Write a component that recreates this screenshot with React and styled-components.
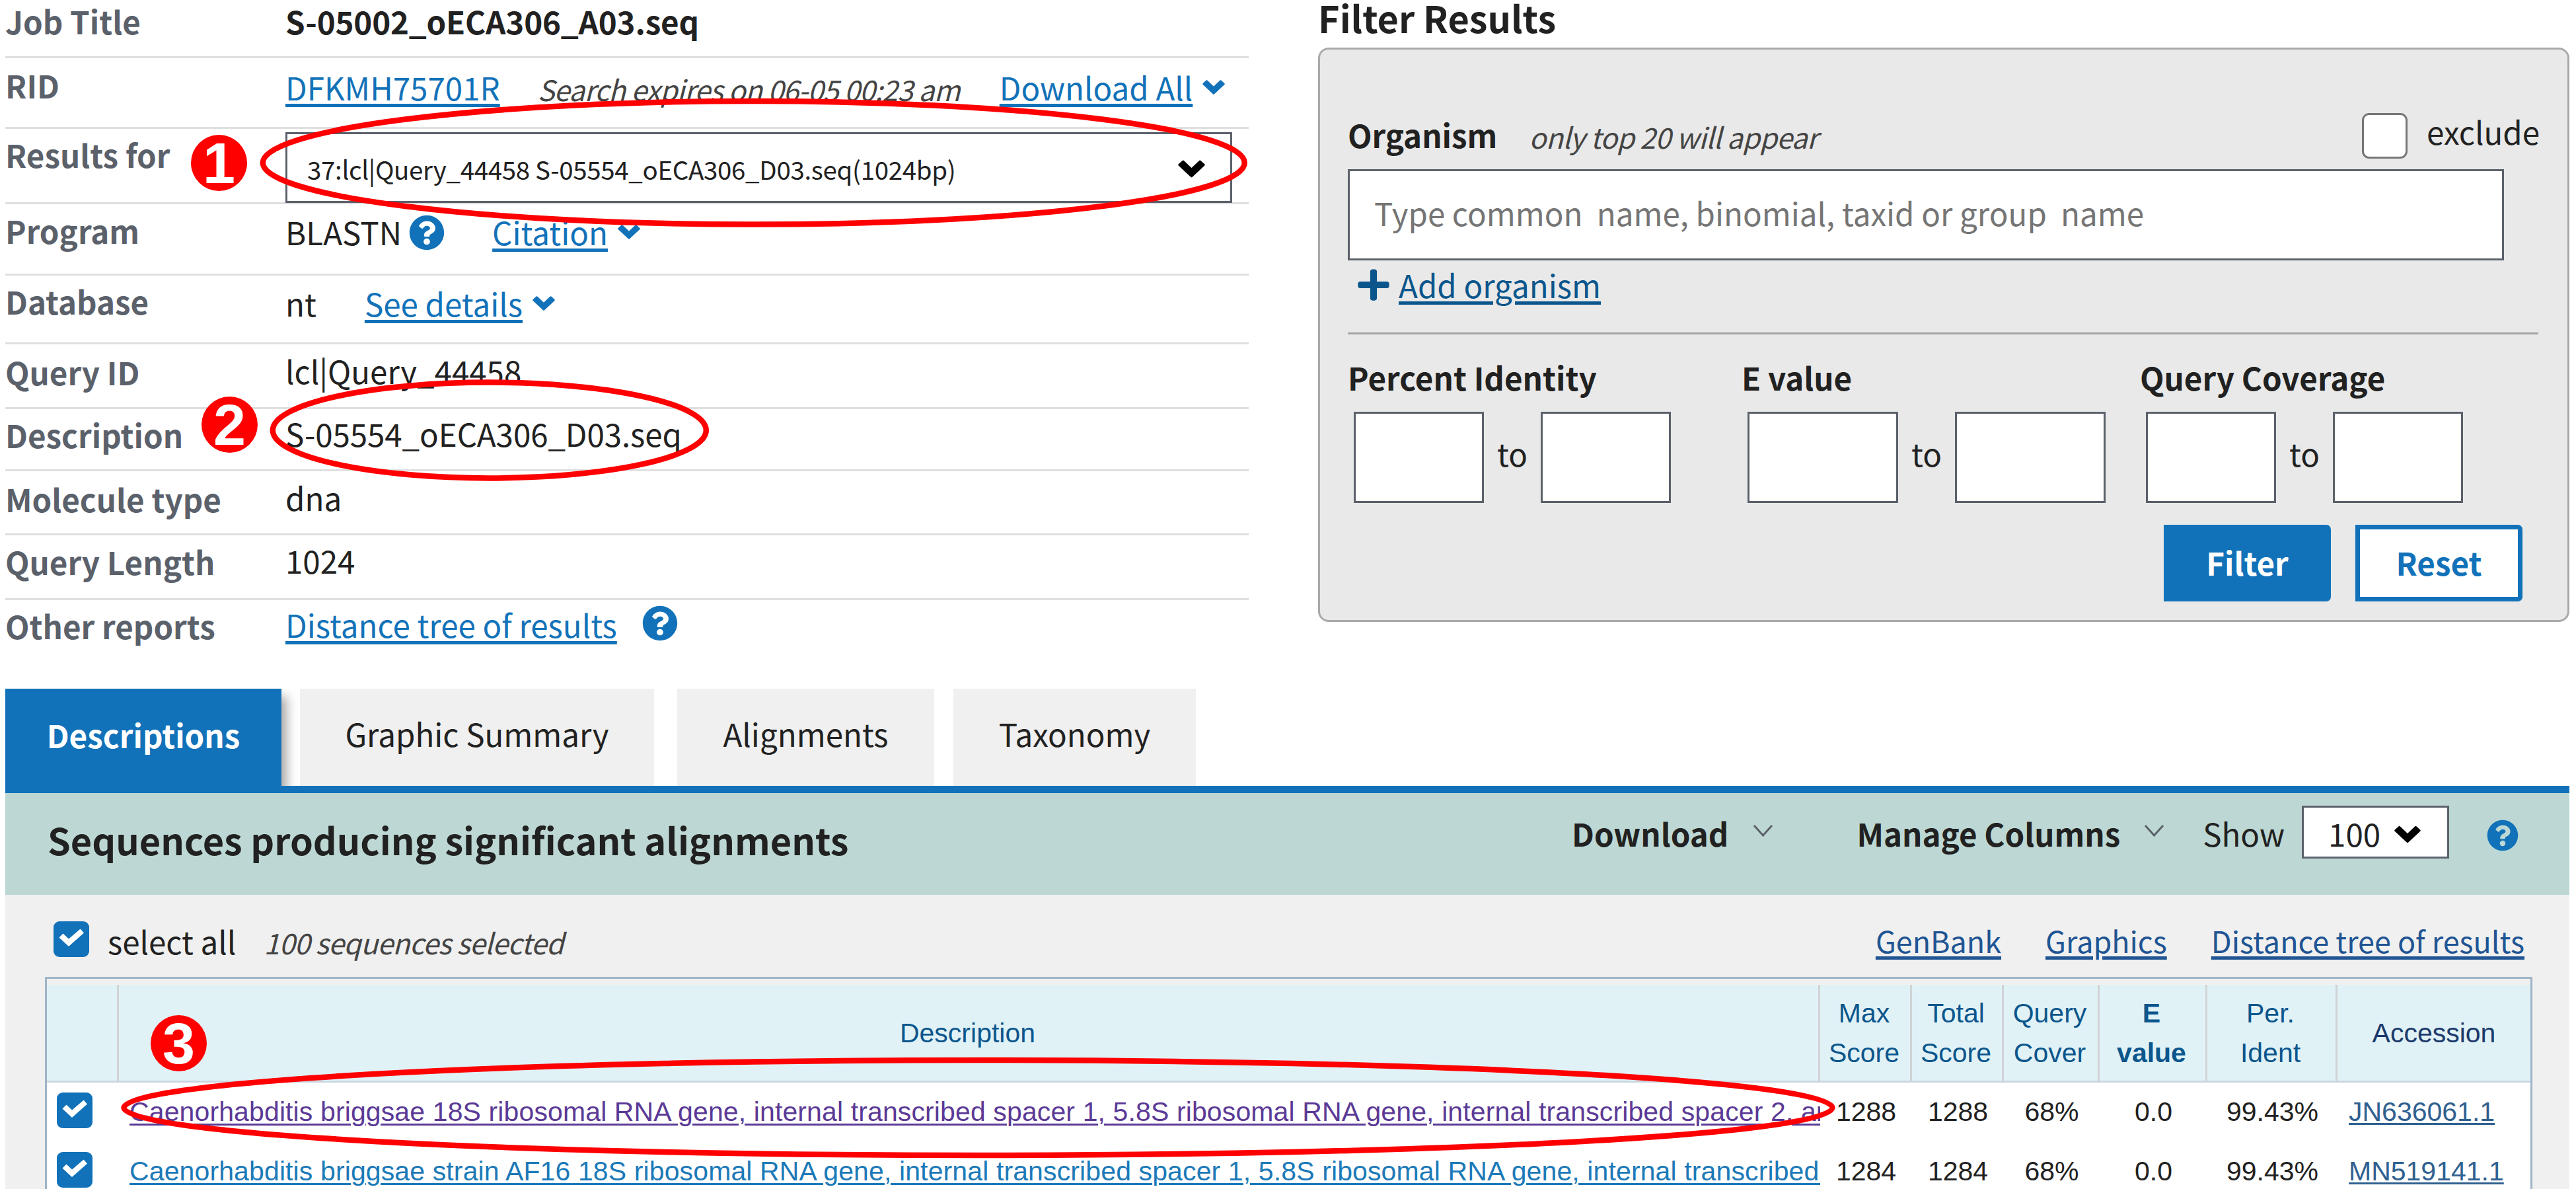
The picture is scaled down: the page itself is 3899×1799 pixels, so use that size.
import React from 'react';
import styled, { createGlobalStyle } from 'styled-components';
import { FaQuestionCircle, FaPlus } from 'react-icons/fa';

const sans = '"Noto Sans CJK SC", "Noto Sans", sans-serif';
const arial = '"Liberation Sans", Arial, sans-serif';

const GlobalStyle = createGlobalStyle`
  * {
    box-sizing: border-box;
  }

  body {
    margin: 0;
    background: #fff;
    overflow: hidden;
  }
`;

const Page = styled.main`
  position: relative;
  width: 3899px;
  height: 1799px;
  padding-left: 8px;
  overflow: hidden;
  background: #fff;
  color: #212121;
  font-family: ${sans};
  font-size: 47.5px;
  line-height: 62px;
`;

const Text = styled.span`
  display: block;
  flex: none;
  margin-top: ${props => props.$top || 0}px;
  margin-left: ${props => props.$left || 0}px;
  font-size: ${props => props.$size || 47.5}px;
  font-weight: ${props => (props.$bold ? 700 : 400)};
  letter-spacing: ${props => props.$spacing || 0}px;
  line-height: 62px;
  white-space: pre;
`;

const Hint = styled(Text)`
  color: #444;
  font-size: 43px;
  font-style: italic;
  letter-spacing: -.75px;
`;

const Link = styled.a`
  display: block;
  flex: none;
  margin-top: ${props => props.$top || 0}px;
  margin-left: ${props => props.$left || 0}px;
  color: ${props => props.$color || '#1272b9'};
  line-height: 62px;
  white-space: pre;
  text-decoration: underline;
  text-decoration-thickness: 5px;
  text-underline-offset: 5px;
`;

const TopSection = styled.section`
  display: flex;
  height: 1042px;
`;

const JobInfo = styled.dl`
  width: 1882px;
  margin: 0;
`;

const InfoRow = styled.div`
  display: flex;
  align-items: flex-start;
  height: ${props => props.$height}px;
  border-bottom: ${props => (props.$last ? 0 : 3)}px solid #dfdfdf;
`;

const Term = styled.dt`
  flex: none;
  width: 424px;
  padding-top: ${props => props.$top}px;
  color: #5b616b;
  font-weight: 700;
  white-space: nowrap;
`;

const Value = styled.dd`
  display: flex;
  align-items: flex-start;
  margin: 0;
  padding-top: ${props => props.$top || 0}px;
`;

const ResultsSelect = styled.div`
  display: flex;
  align-items: flex-start;
  justify-content: space-between;
  width: 1433px;
  height: 107px;
  margin-top: 5px;
  padding: 39px 38px 0 30px;
  border: 3px solid #5b616b;
  background: #fff;
`;

const IconBox = styled.span`
  display: block;
  flex: none;
  margin-top: ${props => props.$top || 0}px;
  margin-left: ${props => props.$left || 0}px;
  color: ${props => props.$color || '#1272b9'};
  line-height: 0;
`;

const FilterSection = styled.section`
  width: 1894px;
  margin-left: 105px;
`;

const FilterTitle = styled.h2`
  height: 72px;
  margin: 0;
  font-size: 55.8px;
  font-weight: 700;
  line-height: 52px;
`;

const FilterPanel = styled.div`
  height: 869px;
  padding: 96px 0 0 42px;
  border: 3px solid #a9a9a9;
  border-radius: 16px;
  background: #e9e9e9;
`;

const OrganismRow = styled.div`
  display: flex;
  align-items: flex-start;
  height: 85px;
`;

const ExcludeLabel = styled.label`
  display: flex;
  align-items: flex-start;
  margin-left: auto;
  padding-right: 42px;
`;

const EmptyCheck = styled.span`
  width: 69px;
  height: 69px;
  border: 3px solid #767676;
  border-radius: 11px;
  background: #fff;
`;

const OrganismInput = styled.div`
  width: 1750px;
  height: 138px;
  padding: 32px 0 0 37px;
  border: 3px solid #5b616b;
  background: #fff;
  color: #757575;
`;

const AddRow = styled.div`
  display: flex;
  align-items: flex-start;
  width: 1802px;
  height: 112px;
  padding-left: 12px;
  border-bottom: 3px solid #a3a3a3;
`;

const Ranges = styled.div`
  display: grid;
  grid-template-columns: 596px 603px 600px;
  padding-top: 34px;
`;

const RangeInputs = styled.div`
  display: flex;
  align-items: flex-start;
  gap: 20px;
  margin: 21px 0 0 9px;
`;

const RangeInput = styled.span`
  width: ${props => props.$width}px;
  height: 138px;
  border: 3px solid #5b616b;
  background: #fff;
`;

const Buttons = styled.div`
  display: flex;
  justify-content: flex-end;
  gap: 37px;
  padding: 33px 68px 0 0;
`;

const Button = styled.button`
  width: 253px;
  height: 116px;
  padding: 0 0 3px;
  border: 7px solid #1272b9;
  border-radius: 0 7px 7px 0;
  background: ${props => (props.$primary ? '#1272b9' : '#fff')};
  color: ${props => (props.$primary ? '#fff' : '#1272b9')};
  font: 700 47.5px/98px ${sans};
`;

const Tabs = styled.nav`
  display: flex;
  width: 3881px;
  height: 158px;
  border-bottom: 11px solid #1272b9;
`;

const Tab = styled.div`
  width: ${props => props.$width}px;
  height: 147px;
  margin-left: ${props => props.$left || 0}px;
  padding-top: ${props => (props.$active ? 39 : 37)}px;
  background: ${props => (props.$active ? '#1272b9' : '#f0f0f0')};
  box-shadow: ${props => (props.$active ? '8px 12px 16px rgba(0, 0, 0, .35)' : 'none')};
  clip-path: ${props => (props.$active ? 'inset(0 -28px 0 0)' : 'none')};
  color: ${props => (props.$active ? '#fff' : '#212121')};
  font-weight: ${props => (props.$active ? 700 : 400)};
  text-align: center;
  white-space: nowrap;
`;

const ResultsPanel = styled.section`
  width: 3881px;
  height: 599px;
  background: #f0f0f0;
`;

const Toolbar = styled.header`
  display: flex;
  align-items: flex-start;
  height: 154px;
  padding-left: 64px;
  background: #bdd8d4;
`;

const ToolbarTitle = styled.h3`
  width: 2307px;
  margin: 39px 0 0;
  font-size: 55.8px;
  font-weight: 700;
  line-height: 62px;
`;

const ShowSelect = styled.div`
  display: flex;
  align-items: flex-start;
  width: 223px;
  height: 80px;
  margin: 19px 0 0 26px;
  padding: 8px 0 0 37px;
  border: 3px solid #5b616b;
  background: #fff;
`;

const SelectionRow = styled.div`
  display: flex;
  align-items: flex-start;
  height: 124px;
  padding: 40px 68px 0 73px;
`;

const SelectionLinks = styled.div`
  display: flex;
  gap: 67px;
  margin-top: -2px;
  margin-left: auto;
  font-size: 44.9px;
`;

const columns = '109px 2575px 139px 139px 145px 163px 197px 1fr';

const Table = styled.div`
  width: 3765px;
  margin-left: 60px;
  padding-top: 9px;
  border: 3px solid #9fb4c7;
  border-bottom: 0;
  font-family: ${arial};
  font-size: 41px;
  line-height: 60px;
`;

const HeaderRow = styled.div`
  display: grid;
  grid-template-columns: ${columns};
  height: 148px;
  border-bottom: 3px solid #c9d6de;
  background: #e1f2f7;
`;

const HeaderCell = styled.div`
  display: flex;
  align-items: center;
  justify-content: center;
  padding-right: ${props => (props.$last ? 0 : 3)}px;
  border-right: ${props => (props.$last ? 0 : 3)}px solid #d0d3d5;
  color: ${props => (props.$last ? '#1b3a6b' : '#0b568c')};
  font-weight: ${props => (props.$bold ? 700 : 400)};
  text-align: center;
  white-space: pre;
`;

const Row = styled.div`
  display: grid;
  grid-template-columns: ${columns};
  height: 89.5px;
  background: #fff;
`;

const CheckCell = styled.div`
  padding: 15px 0 0 15px;
`;

const DescriptionCell = styled.div`
  padding: 13px 0 0 16px;
  overflow: hidden;
  letter-spacing: .12px;
`;

const NumberCell = styled.div`
  padding-top: 14px;
  text-align: center;
`;

const AccessionCell = styled.div`
  padding: 13px 0 0 17px;
`;

const RowLink = styled(Link)`
  text-decoration-thickness: 3px;
  text-underline-offset: ${props => props.$offset || 4}px;
`;

const BlueCheck = styled.span`
  display: block;
  flex: none;
  width: 54px;
  height: 54px;
  border-radius: 9px;
  background: #1272b9;
  line-height: 0;
`;

// Numbered marks and rings that lie over the page
const Ring = styled.svg`
  position: absolute;
  top: 0;
  left: 0;
  fill: none;
  stroke: #fe0000;
  stroke-width: 8.5;
  pointer-events: none;
`;

const Marker = styled.span`
  position: absolute;
  top: ${props => props.$y}px;
  left: ${props => props.$x}px;
  width: 85px;
  height: 85px;
  border-radius: 50%;
  background: #fe0000;
  color: #fff;
  font: 700 88px/86px ${arial};
  text-align: center;
`;

const Chevron = ({ width = 34, height = 22 }) => (
  <svg width={width} height={height} viewBox="0 0 34 22">
    <path
      d="M1.5 6 L6.5 1.5 L17 11.5 L27.5 1.5 L32.5 6 L17 20.5 Z"
      fill="currentColor"
      stroke="currentColor"
      strokeWidth="2.5"
      strokeLinejoin="round"
    />
  </svg>
);

const ThinChevron = () => (
  <svg width="31" height="20" viewBox="0 0 31 20">
    <path d="M2 2 L15.5 17 L29 2" fill="none" stroke="#5b616b" strokeWidth="3" />
  </svg>
);

const Checked = () => (
  <BlueCheck>
    <svg width="54" height="54" viewBox="0 0 54 54">
      <path
        d="M9.5 24.5 L14.5 19.5 L23 27.5 L40.5 12.5 L45 17.5 L23 37 Z"
        fill="#fff"
        stroke="#fff"
        strokeWidth="1.5"
        strokeLinejoin="round"
      />
    </svg>
  </BlueCheck>
);

const headers = [
  { text: '' },
  { text: 'Description' },
  { text: 'Max\nScore' },
  { text: 'Total\nScore' },
  { text: 'Query\nCover' },
  { text: 'E\nvalue', bold: true },
  { text: 'Per.\nIdent' },
  { text: 'Accession', last: true },
];

const hits = [
  {
    description: 'Caenorhabditis briggsae 18S ribosomal RNA gene, internal transcribed spacer 1, 5.8S ribosomal RNA gene, internal transcribed spacer 2, an',
    color: '#5b3a96',
    values: ['1288', '1288', '68%', '0.0', '99.43%'],
    accession: 'JN636061.1',
  },
  {
    description: 'Caenorhabditis briggsae strain AF16 18S ribosomal RNA gene, internal transcribed spacer 1, 5.8S ribosomal RNA gene, internal transcribed ',
    color: '#1c7ab8',
    values: ['1284', '1284', '68%', '0.0', '99.43%'],
    accession: 'MN519141.1',
  },
];

const rings = [
  [1140.8, 246.3, 743, 93.3],
  [740.8, 651, 328, 72.4],
  [1480.5, 1676, 1293, 72],
];

const Range = ({ label, width }) => (
  <div>
    <Text $bold>{label}</Text>
    <RangeInputs>
      <RangeInput $width={width} />
      <Text $top={32}>to</Text>
      <RangeInput $width={width} />
    </RangeInputs>
  </div>
);

const JobDetails = () => (
  <JobInfo>
    <InfoRow $height={88}>
      <Term $top={1}>Job Title</Term>
      <Value $top={1}><Text $bold $spacing={-0.2}>S-05002_oECA306_A03.seq</Text></Value>
    </InfoRow>
    <InfoRow $height={107}>
      <Term $top={10}>RID</Term>
      <Value $top={13}>
        <Link>DFKMH75701R</Link>
        <Hint $left={57} $top={2}>Search expires on 06-05 00:23 am</Hint>
        <Link $left={60}>Download All</Link>
        <IconBox $left={15} $top={20}><Chevron /></IconBox>
      </Value>
    </InfoRow>
    <InfoRow $height={114}>
      <Term $top={8}>Results for</Term>
      <Value>
        <ResultsSelect>
          <Text $size={38.5} $spacing={-0.35} $top={-18}>37:lcl|Query_44458 S-05554_oECA306_D03.seq(1024bp)</Text>
          <IconBox $color="#000"><Chevron width={41} height={27} /></IconBox>
        </ResultsSelect>
      </Value>
    </InfoRow>
    <InfoRow $height={108}>
      <Term $top={9}>Program</Term>
      <Value $top={11}>
        <Text>BLASTN</Text>
        <IconBox $left={11} $top={5}><FaQuestionCircle size={54} /></IconBox>
        <Link $left={72}>Citation</Link>
        <IconBox $left={15} $top={20}><Chevron /></IconBox>
      </Value>
    </InfoRow>
    <InfoRow $height={104}>
      <Term $top={8}>Database</Term>
      <Value $top={11}>
        <Text>nt</Text>
        <Link $left={73}>See details</Link>
        <IconBox $left={15} $top={20}><Chevron /></IconBox>
      </Value>
    </InfoRow>
    <InfoRow $height={98}>
      <Term $top={11}>Query ID</Term>
      <Value $top={9}><Text>lcl|Query_44458</Text></Value>
    </InfoRow>
    <InfoRow $height={94}>
      <Term $top={8}>Description</Term>
      <Value $top={6}><Text $spacing={-0.1}>S-05554_oECA306_D03.seq</Text></Value>
    </InfoRow>
    <InfoRow $height={97}>
      <Term $top={11}>Molecule type</Term>
      <Value $top={9}><Text>dna</Text></Value>
    </InfoRow>
    <InfoRow $height={98}>
      <Term $top={9}>Query Length</Term>
      <Value $top={7}><Text>1024</Text></Value>
    </InfoRow>
    <InfoRow $height={100} $last>
      <Term $top={8}>Other reports</Term>
      <Value $top={6}>
        <Link>Distance tree of results</Link>
        <IconBox $left={38} $top={2}><FaQuestionCircle size={54} /></IconBox>
      </Value>
    </InfoRow>
  </JobInfo>
);

const Filters = () => (
  <FilterSection>
    <FilterTitle>Filter Results</FilterTitle>
    <FilterPanel>
      <OrganismRow>
        <Text $bold $top={2}>Organism</Text>
        <Hint $left={48} $top={4}>only top 20 will appear</Hint>
        <ExcludeLabel>
          <EmptyCheck />
          <Text $left={29} $top={-3}>exclude</Text>
        </ExcludeLabel>
      </OrganismRow>
      <OrganismInput>
        <Text>Type common  name, binomial, taxid or group  name</Text>
      </OrganismInput>
      <AddRow>
        <IconBox $top={10} $color="#0a568c"><FaPlus size={54} /></IconBox>
        <Link $left={11} $top={6} $color="#0a568c">Add organism</Link>
      </AddRow>
      <Ranges>
        <Range label="Percent Identity" width={197} />
        <Range label="E value" width={228} />
        <Range label="Query Coverage" width={197} />
      </Ranges>
      <Buttons>
        <Button $primary>Filter</Button>
        <Button>Reset</Button>
      </Buttons>
    </FilterPanel>
  </FilterSection>
);

const App = () => (
  <Page>
    <GlobalStyle />
    <TopSection>
      <JobDetails />
      <Filters />
    </TopSection>

    <Tabs>
      <Tab $active $width={418}>Descriptions</Tab>
      <Tab $width={536} $left={28}>Graphic Summary</Tab>
      <Tab $width={389} $left={35}>Alignments</Tab>
      <Tab $width={367} $left={29}>Taxonomy</Tab>
    </Tabs>

    <ResultsPanel>
      <Toolbar>
        <ToolbarTitle>Sequences producing significant alignments</ToolbarTitle>
        <Text $bold $top={30}>Download</Text>
        <IconBox $left={37} $top={47}><ThinChevron /></IconBox>
        <Text $bold $top={30} $left={126}>Manage Columns</Text>
        <IconBox $left={36} $top={47}><ThinChevron /></IconBox>
        <Text $top={30} $left={58}>Show</Text>
        <ShowSelect>
          <Text>100</Text>
          <IconBox $left={21} $top={19} $color="#000"><Chevron width={40} height={27} /></IconBox>
        </ShowSelect>
        <IconBox $left={57} $top={40}><FaQuestionCircle size={48} /></IconBox>
      </Toolbar>
      <SelectionRow>
        <Checked />
        <Text $left={28} $top={-1}>select all</Text>
        <Hint $left={42}>100 sequences selected</Hint>
        <SelectionLinks>
          <Link $color="#205493">GenBank</Link>
          <Link $color="#205493">Graphics</Link>
          <Link $color="#205493">Distance tree of results</Link>
        </SelectionLinks>
      </SelectionRow>
      <Table>
        <HeaderRow>
          {headers.map(header => (
            <HeaderCell key={header.text} $bold={header.bold} $last={header.last}>
              {header.text}
            </HeaderCell>
          ))}
        </HeaderRow>
        {hits.map(hit => (
          <Row key={hit.accession}>
            <CheckCell><Checked /></CheckCell>
            <DescriptionCell>
              <RowLink $color={hit.color}>{hit.description}</RowLink>
            </DescriptionCell>
            {hit.values.map((value, index) => (
              <NumberCell key={headers[index + 2].text}>{value}</NumberCell>
            ))}
            <AccessionCell>
              <RowLink $color="#2f6190" $offset={3}>{hit.accession}</RowLink>
            </AccessionCell>
          </Row>
        ))}
      </Table>
    </ResultsPanel>

    <Ring width="3899" height="1799" viewBox="0 0 3899 1799">
      {rings.map(([cx, cy, rx, ry]) => (
        <ellipse key={cx} cx={cx} cy={cy} rx={rx} ry={ry} />
      ))}
    </Ring>
    <Marker $x={289} $y={204}>1</Marker>
    <Marker $x={305} $y={600}>2</Marker>
    <Marker $x={228} $y={1536}>3</Marker>
  </Page>
);

export default App;
